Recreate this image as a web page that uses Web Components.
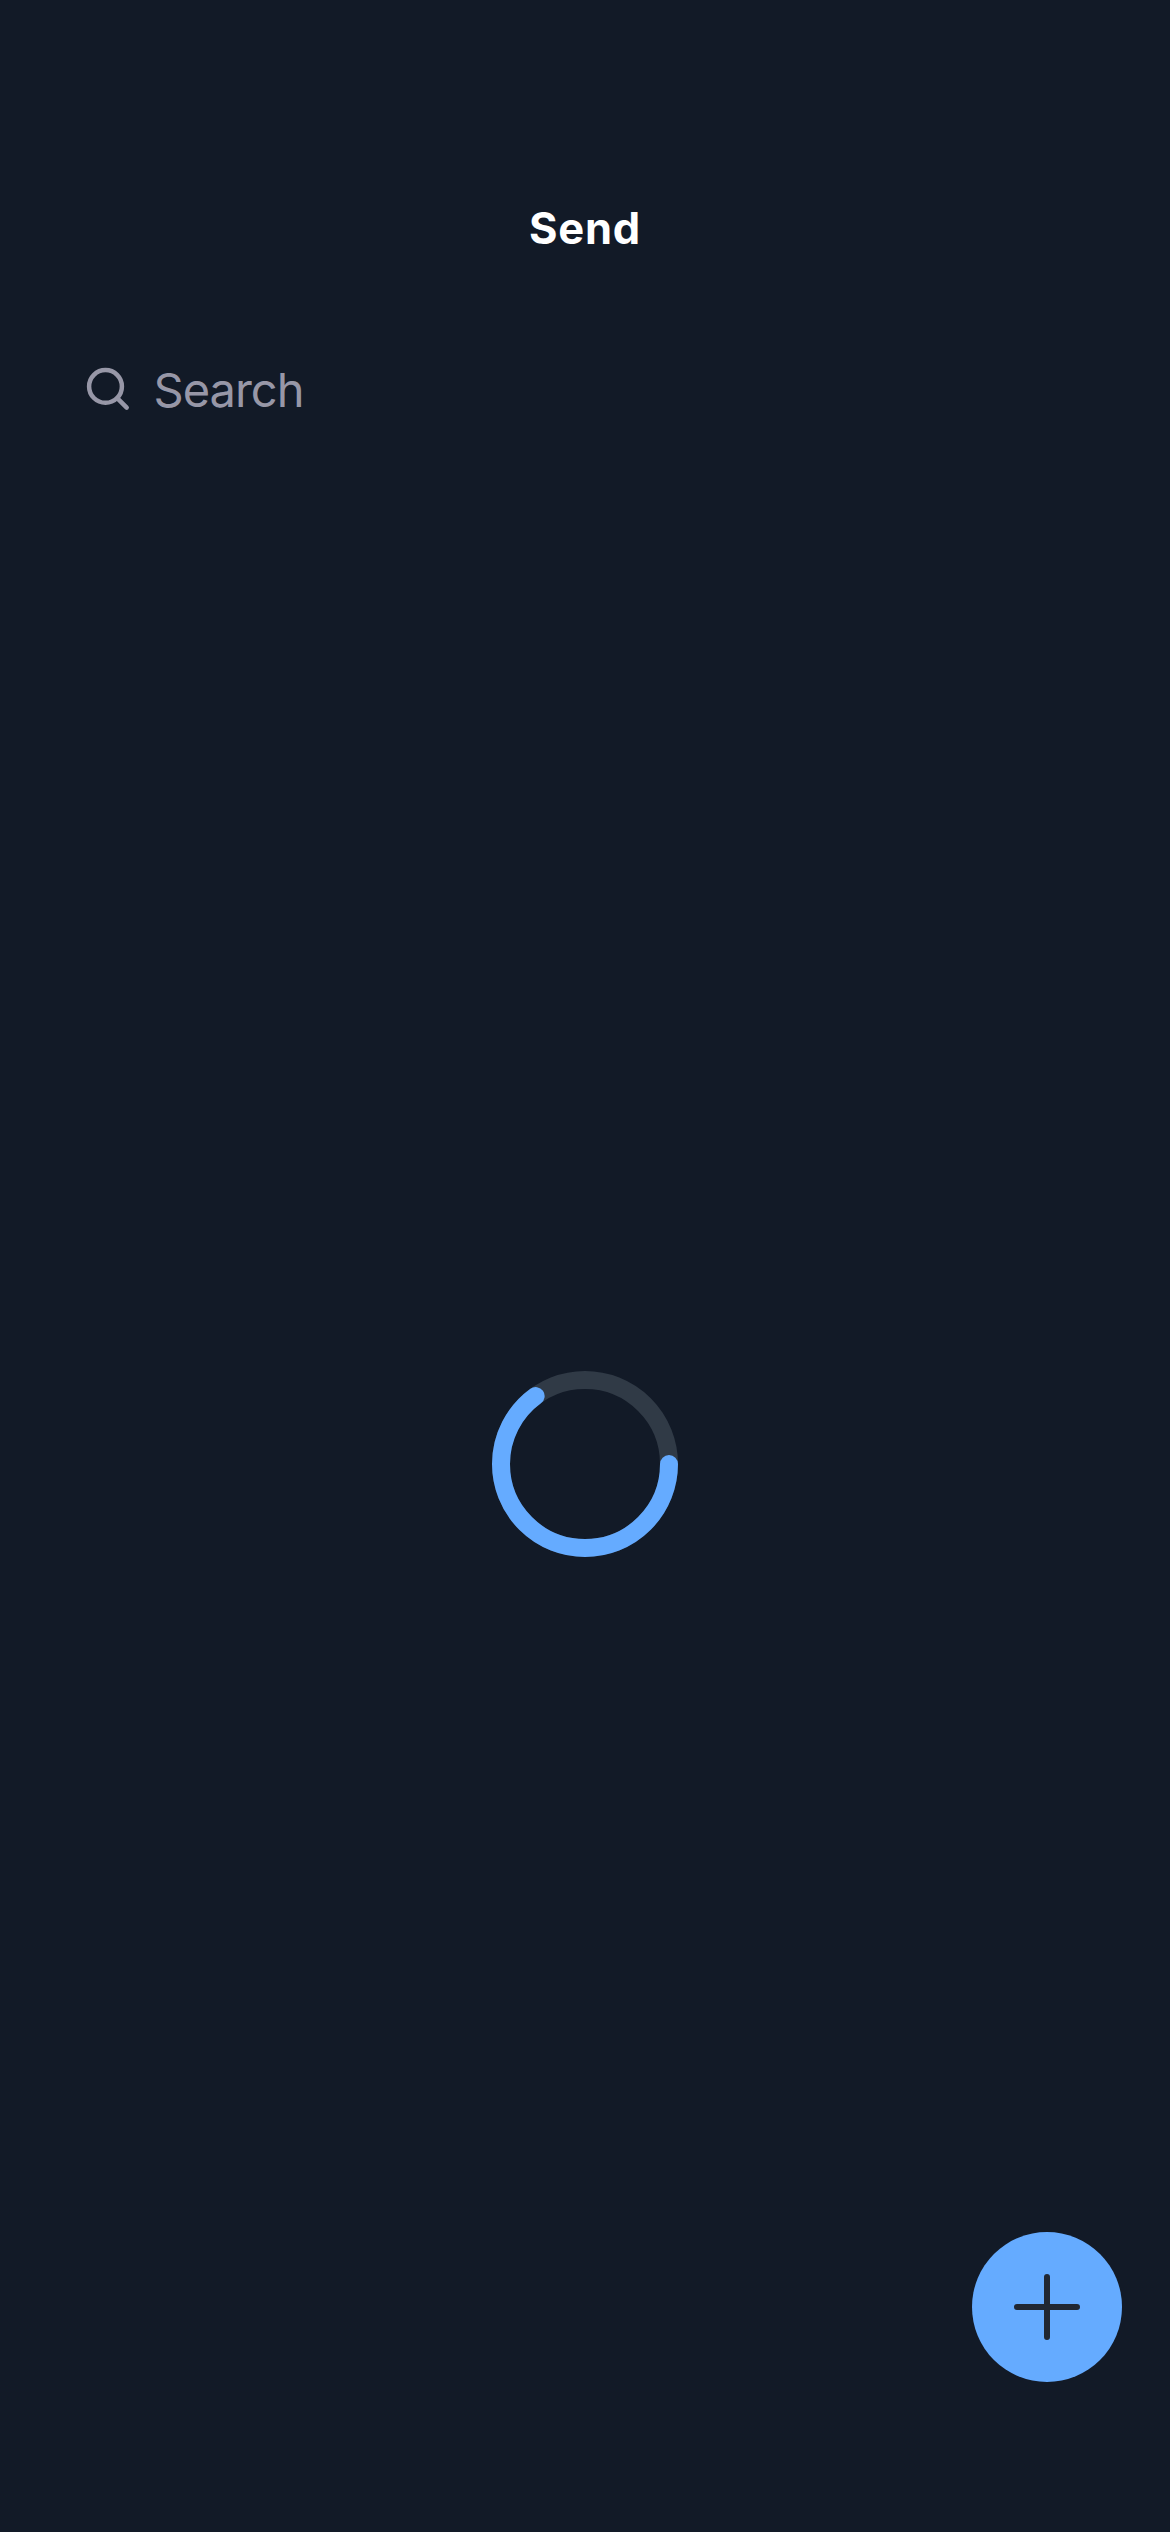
<!DOCTYPE html>
<html lang="en">
<head>
<meta charset="utf-8">
<title>Send</title>
<style>
html,body{margin:0;background:#121a27}
</style>
</head>
<body>
<send-screen></send-screen>
<script>
const define = (name, markup) => {
  const template = document.createElement('template');
  template.innerHTML = markup;
  customElements.define(name, class extends HTMLElement {
    constructor() {
      super();
      this.attachShadow({ mode: 'open' }).append(template.content.cloneNode(true));
    }
  });
};

define('nav-title', `
<style>
:host{display:flex;justify-content:center;padding-top:198px;height:126px}
h1{margin:0;font:650 43.5px/60px Inter,"Liberation Sans",sans-serif;color:#fff;letter-spacing:.8px}
</style>
<h1><slot></slot></h1>`);

define('search-field', `
<style>
:host{display:flex;align-items:center;height:132px;padding-left:84px;color:#9797a7;
font:400 47px/60px Inter,"Liberation Sans",sans-serif}
svg{display:block;width:48px;height:48px;flex:none}
span{padding-left:21.5px;letter-spacing:-1px}
</style>
<svg viewBox="0 0 48 48" fill="none" stroke="currentColor" stroke-width="4.5" stroke-linecap="round"><circle cx="21.5" cy="20.4" r="16.4"/><path d="M33.2 32.1 42.7 41.6"/></svg>
<span><slot></slot></span>`);

define('loading-ring', `
<style>
:host{display:block;width:186px;height:186px}
svg{display:block}
</style>
<svg width="186" height="186" viewBox="0 0 186 186" fill="none" stroke-width="18" role="img" aria-label="Loading">
<circle cx="93" cy="93" r="84" stroke="#303a46"/>
<circle cx="93" cy="93" r="84" stroke="#65abff" stroke-linecap="round" pathLength="100" stroke-dasharray="65 100"/>
</svg>`);

define('add-button', `
<style>
:host{display:block;width:150px;height:150px}
button{display:flex;align-items:center;justify-content:center;width:150px;height:150px;padding:0;border:0;border-radius:50%;background:#65abff}
svg{display:block}
</style>
<button aria-label="Add"><svg width="72" height="72" viewBox="0 0 72 72" stroke="#202733" stroke-width="6" stroke-linecap="round"><path d="M6 36H66M36 6V66"/></svg></button>`);

define('send-screen', `
<style>
:host{display:flex;flex-direction:column;box-sizing:border-box;width:1170px;height:2532px;background:#121a27;overflow:hidden}
main{display:flex;flex:1;justify-content:center;align-items:flex-start;padding-top:915px}
footer{display:flex;justify-content:flex-end;padding:0 48px 150px}
</style>
<nav-title>Send</nav-title>
<search-field>Search</search-field>
<main><loading-ring></loading-ring></main>
<footer><add-button></add-button></footer>`);
</script>
</body>
</html>
